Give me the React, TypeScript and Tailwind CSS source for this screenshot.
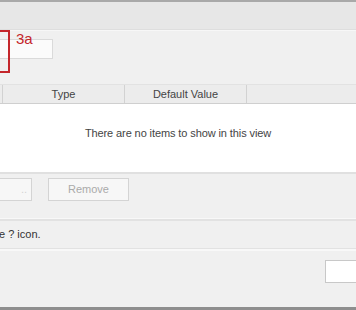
import React from "react";

export default function App() {
  return (
    <div
      className="relative w-[356px] h-[310px] overflow-hidden bg-[#f0f0f0] text-[#333] flex flex-col"
      style={{ fontFamily: '"Liberation Sans", Arial, sans-serif' }}
    >
      <div className="h-[2px] bg-[#a9a9a9] shrink-0" />
      {/* header band */}
      <div className="h-[28px] bg-[#e7e7e7] border-b border-[#dedede] shrink-0" />
      <div className="h-[1px] bg-[#f7f7f7] shrink-0" />

      {/* input row */}
      <div className="mt-[8px] h-[20px] flex shrink-0">
        <div className="w-[53px] h-[20px] bg-[#fbfbfb] border border-l-0 border-[#dadada]" />
      </div>

      {/* table */}
      <div className="mt-[25px] flex flex-col shrink-0">
        <div className="h-[20px] flex items-center bg-[#ececec] border-t border-[#e2e2e2] border-b border-b-[#cfcfcf] text-[11px] text-[#444]">
          <div className="w-[3px] h-full border-r border-[#d2d2d2]" />
          <div className="w-[122px] h-full flex items-center justify-center border-r border-[#d2d2d2]">Type</div>
          <div className="w-[122px] h-full flex items-center justify-center border-r border-[#d2d2d2]">Default Value</div>
          <div className="flex-1" />
        </div>
        <div className="h-[68px] bg-white flex items-center justify-center pb-[9px] text-[11px] tracking-[-0.1px] text-[#444]">
          There are no items to show in this view
        </div>
        <div className="h-[2px] bg-[#e0e0e0]" />
      </div>

      {/* buttons */}
      <div className="mt-[4px] flex items-center gap-[16px] shrink-0">
        <div className="w-[32px] h-[23px] bg-[#f7f7f7] border border-l-0 border-[#d4d4d4] flex items-center justify-end pr-[4px] text-[11px] text-[#d4d4d4]">..</div>
        <div className="w-[81px] h-[23px] bg-[#f7f7f7] border border-[#d4d4d4] flex items-center justify-center text-[11px] text-[#aaa]">Remove</div>
      </div>

      <div className="mt-[17px] h-[1px] bg-[#f8f8f8] shrink-0" />
      <div className="h-[2px] bg-[#e2e2e2] shrink-0" />
      <div className="h-[27px] flex items-center pb-[1px] text-[11px] text-[#333] shrink-0 -ml-[1px]">e ? icon.</div>
      <div className="h-[1px] bg-[#e2e2e2] shrink-0" />
      <div className="h-[2px] bg-[#f8f8f8] shrink-0" />

      <div className="flex-1 flex justify-end items-start pt-[9px]">
        <div className="w-[31px] h-[23px] bg-white border border-r-0 border-[#c8c8c8]" />
      </div>
      <div className="h-[3px] bg-[#8e8e8e] shrink-0" />

      {/* red annotation */}
      <div className="absolute left-[-4px] top-[30px] w-[14px] h-[43px] border-2 border-[#c4262b]" />
      <div className="absolute left-[16px] top-[30px] text-[15px] leading-[18px] text-[#c4262b]">3a</div>
    </div>
  );
}
